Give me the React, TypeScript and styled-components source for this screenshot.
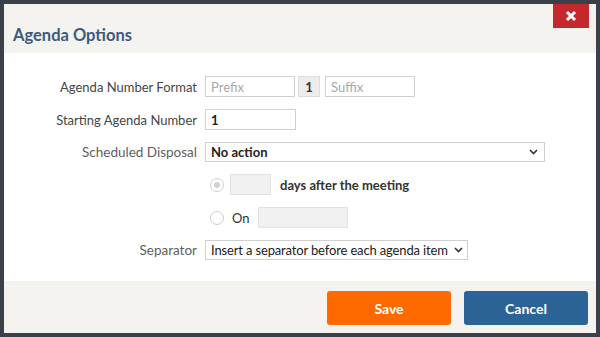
import styled, { createGlobalStyle } from "styled-components";

const GlobalStyle = createGlobalStyle`
	html, body {
		margin: 0;
		padding: 0;
		background: #3b4048;
	}
	body {
		font-family: Lato, "Liberation Sans", sans-serif;
		font-size: 13px;
		color: #444;
	}
`;

const Overlay = styled.div`
	width: 600px;
	height: 337px;
	padding: 4px;
	box-sizing: border-box;
	background: #3b4048;
`;

const Dialog = styled.div`
	height: 100%;
	display: flex;
	flex-direction: column;
	background: #fff;
`;

const Header = styled.header`
	height: 49px;
	display: flex;
	align-items: flex-start;
	justify-content: space-between;
	background: #f4f3ef;
	padding: 0 7px 0 9px;
`;

const Title = styled.h1`
	margin: 21px 0 0;
	font-size: 16.5px;
	font-weight: 700;
	color: #3e5a7e;
`;

const CloseButton = styled.button`
	width: 36px;
	height: 24px;
	border: none;
	padding: 0;
	background: #c4282d;
	display: flex;
	align-items: center;
	justify-content: center;
	cursor: pointer;
`;

const Body = styled.div`
	flex: 1;
	display: flex;
	flex-direction: column;
	gap: 12px;
	padding-top: 23px;
`;

const Row = styled.div`
	display: grid;
	grid-template-columns: 193px auto;
	column-gap: 8px;
	align-items: center;
`;

const Label = styled.label`
	text-align: right;
	color: ${(props: { dim?: boolean }) => (props.dim ? "#5e5e5e" : "#454545")};
	font-size: ${(props: { dim?: boolean }) => (props.dim ? 13.5 : 13)}px;
	white-space: nowrap;
`;

const Controls = styled.div`
	display: flex;
	align-items: center;
	gap: ${(props: { gap?: number }) => props.gap ?? 4}px;
	padding-left: ${(props: { indent?: number }) => props.indent ?? 0}px;
`;

const TextBox = styled.div<{ w: number; muted?: boolean; placeholder?: boolean }>`
	width: ${(p) => p.w}px;
	height: 21px;
	box-sizing: border-box;
	border: 1px solid ${(p) => (p.muted ? "#e2e2e2" : "#cfcfcf")};
	background: ${(p) => (p.muted ? "#f1f1f1" : "#fff")};
	padding: 0 5px;
	display: flex;
	align-items: center;
	font-weight: ${(p) => (p.placeholder ? 400 : 700)};
	color: ${(p) => (p.placeholder ? "#a8a8a8" : "#222")};
`;

const Counter = styled.div`
	width: 22px;
	height: 21px;
	box-sizing: border-box;
	border: 1px solid #ddd;
	background: #ececec;
	display: flex;
	align-items: center;
	justify-content: center;
	font-weight: 700;
	color: #333;
`;

const Select = styled.div<{ w: number; light?: boolean }>`
	width: ${(p) => p.w}px;
	height: 20px;
	box-sizing: border-box;
	border: 1px solid #cfcfcf;
	padding: 0 6px 0 5px;
	display: flex;
	align-items: center;
	justify-content: space-between;
	gap: 6px;
	white-space: nowrap;
	font-weight: ${(p) => (p.light ? 400 : 700)};
	letter-spacing: ${(p) => (p.light ? "-0.15px" : "0")};
	color: #222;
`;

const Radio = styled.span<{ checked?: boolean }>`
	width: 12px;
	height: 12px;
	border-radius: 50%;
	border: 1px solid #cfcfcf;
	background: #fff;
	display: flex;
	align-items: center;
	justify-content: center;
	margin-right: 6px;
	&::after {
		content: "";
		width: 6px;
		height: 6px;
		border-radius: 50%;
		background: ${(p) => (p.checked ? "#d0d0d0" : "transparent")};
	}
`;

const InlineText = styled.span<{ strong?: boolean }>`
	font-weight: ${(p) => (p.strong ? 700 : 400)};
	color: #333;
	margin: 0 4px;
`;

const Footer = styled.footer`
	height: 52px;
	background: #f4f3ef;
	display: flex;
	justify-content: flex-end;
	align-items: flex-start;
	gap: 13px;
	padding: 10px 8px 0 0;
	box-sizing: border-box;
`;

const Button = styled.button<{ kind: "save" | "cancel" }>`
	width: 124px;
	height: 34px;
	border: none;
	border-radius: 3px;
	font-family: Lato, "Liberation Sans", sans-serif;
	font-size: 14px;
	font-weight: 700;
	color: #fff;
	background: ${(p) => (p.kind === "save" ? "#ff6a00" : "#2b6396")};
`;

function Chevron() {
	return (
		<svg width="9" height="6" viewBox="0 0 9 6" style={{ flexShrink: 0 }}>
			<path d="M1 1l3.5 3.5L8 1" fill="none" stroke="#333" strokeWidth="1.6" />
		</svg>
	);
}

function App() {
	return (
		<Overlay>
			<GlobalStyle />
			<Dialog>
				<Header>
					<Title>Agenda Options</Title>
					<CloseButton aria-label="Close">
						<svg width="12" height="12" viewBox="0 0 12 12">
							<path d="M2 2l8 8M10 2l-8 8" stroke="#fff" strokeWidth="3" />
						</svg>
					</CloseButton>
				</Header>
				<Body>
					<Row>
						<Label>Agenda Number Format</Label>
						<Controls gap={3}>
							<TextBox w={90} placeholder>
								Prefix
							</TextBox>
							<Counter>1</Counter>
							<TextBox w={90} placeholder style={{ marginLeft: 2 }}>
								Suffix
							</TextBox>
						</Controls>
					</Row>
					<Row>
						<Label>Starting Agenda Number</Label>
						<Controls>
							<TextBox w={91}>1</TextBox>
						</Controls>
					</Row>
					<Row>
						<Label dim>Scheduled Disposal</Label>
						<Controls>
							<Select w={340}>
								No action
								<Chevron />
							</Select>
						</Controls>
					</Row>
					<Row>
						<span />
						<Controls indent={5} gap={0}>
							<Radio checked />
							<TextBox w={41} muted />
							<InlineText strong style={{ marginLeft: 9 }}>
								days after the meeting
							</InlineText>
						</Controls>
					</Row>
					<Row>
						<span />
						<Controls indent={5} gap={0}>
							<Radio />
							<InlineText style={{ marginLeft: 2, marginRight: 8 }}>On</InlineText>
							<TextBox w={90} muted />
						</Controls>
					</Row>
					<Row>
						<Label dim>Separator</Label>
						<Controls>
							<Select w={263} light>
								Insert a separator before each agenda item
								<Chevron />
							</Select>
						</Controls>
					</Row>
				</Body>
				<Footer>
					<Button kind="save">Save</Button>
					<Button kind="cancel">Cancel</Button>
				</Footer>
			</Dialog>
		</Overlay>
	);
}

export default App;
